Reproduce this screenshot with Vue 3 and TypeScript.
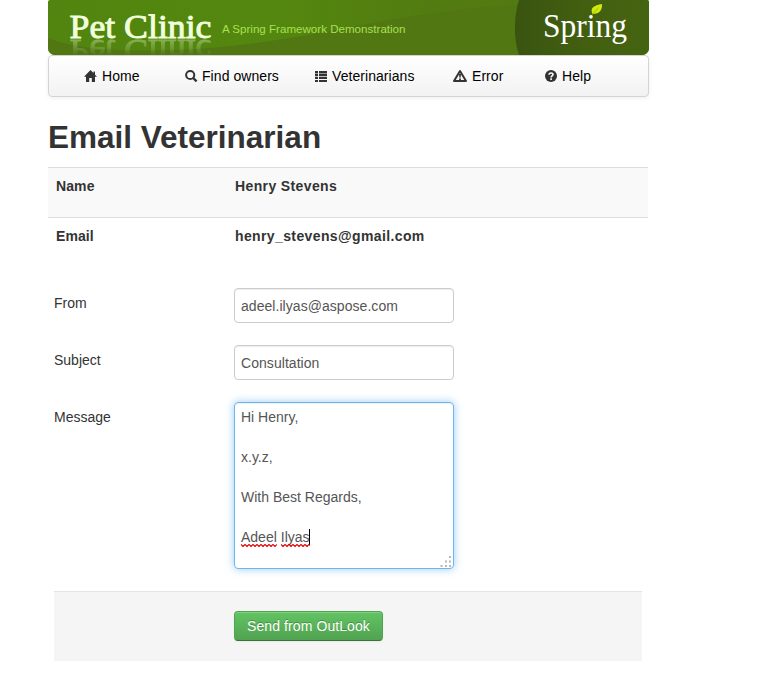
<script setup lang="ts">
import { ref } from 'vue'

type IconName = 'home' | 'search' | 'list' | 'warning' | 'help'

interface NavItem {
  label: string
  icon: IconName
}

const navItems: NavItem[] = [
  { label: 'Home', icon: 'home' },
  { label: 'Find owners', icon: 'search' },
  { label: 'Veterinarians', icon: 'list' },
  { label: 'Error', icon: 'warning' },
  { label: 'Help', icon: 'help' },
]

const from = ref('adeel.ilyas@aspose.com')
const subject = ref('Consultation')
const messageLines: string[] = ['Hi Henry,', '', 'x.y.z,', '', 'With Best Regards,', '']
const signature: string[] = ['Adeel', 'Ilyas']
</script>

<template>
  <div class="page">
    <header class="banner">
      <svg width="601" height="55" viewBox="0 0 601 55">
        <defs>
          <linearGradient id="base" x1="0" x2="1" y1="0" y2="0">
            <stop offset="0" stop-color="#52850f" />
            <stop offset="0.38" stop-color="#54870f" />
            <stop offset="0.65" stop-color="#527b11" />
            <stop offset="0.8" stop-color="#527a12" />
          </linearGradient>
          <linearGradient id="panel" x1="0" x2="1" y1="0" y2="0">
            <stop offset="0" stop-color="#3a5410" />
            <stop offset="0.5" stop-color="#425f10" />
            <stop offset="1" stop-color="#456411" />
          </linearGradient>
          <linearGradient id="fade" x1="0" x2="0" y1="39" y2="54" gradientUnits="userSpaceOnUse">
            <stop offset="0" stop-color="#fff" stop-opacity="0.36" />
            <stop offset="1" stop-color="#fff" stop-opacity="0.04" />
          </linearGradient>
          <mask id="reflect" maskUnits="userSpaceOnUse" x="0" y="39" width="200" height="16">
            <rect x="0" y="39" width="200" height="16" fill="url(#fade)" />
          </mask>
        </defs>
        <rect width="601" height="55" fill="url(#base)" />
        <path d="M0 38C25 48 62 50.5 100 50.5C190 50 260 35 330 22C390 11 430 7 480 4V55H0Z" fill="#517713" />
        <path d="M471 0C466 15 465 38 471 55H601V0Z" fill="url(#panel)" />
        <text class="brand" x="21.500" y="38" textLength="142" lengthAdjust="spacingAndGlyphs">Pet Clinic</text>
        <g mask="url(#reflect)" aria-hidden="true">
          <text class="brand" x="21.500" y="-40" transform="scale(1 -1)" textLength="142" lengthAdjust="spacingAndGlyphs">Pet Clinic</text>
        </g>
        <text class="tagline" x="174" y="33" textLength="183.500" lengthAdjust="spacingAndGlyphs">A Spring Framework Demonstration</text>
        <text class="spring" x="495" y="36.500" textLength="84" lengthAdjust="spacingAndGlyphs">Spring</text>
        <path d="M544.5 14C541.5 8 546 5.500 554 4C554.500 10 551.500 14 544.500 14Z" fill="#d0e80c" />
        <path d="M544 15L550.500 7.500" stroke="#8ba60c" stroke-width="0.6" />
      </svg>
    </header>

    <nav class="nav">
      <a v-for="item in navItems" :key="item.label" class="nav-item">
        <svg class="icon" width="14" height="14" viewBox="0 0 14 14">
          <path v-if="item.icon === 'home'" d="M6.5 1L0 7.800H2V13H5.200V9H7.800V13H11V7.800H13L11 5.700V2.500H9.500V4.100Z" />
          <g v-else-if="item.icon === 'search'" fill="none" stroke="#333">
            <circle cx="5.2" cy="6" r="4.1" stroke-width="2" />
            <path d="M8.2 9L11.6 12.4" stroke-width="2.4" />
          </g>
          <path v-else-if="item.icon === 'list'" d="M0 2H3V4.4H0ZM4 2H12V4.4H4ZM0 5.1H3V7.2H0ZM4 5.1H12V7.2H4ZM0 8H3V10.1H0ZM4 8H12V10.1H4ZM0 11H3V13H0ZM4 11H12V13H4Z" />
          <g v-else-if="item.icon === 'warning'">
            <path d="M7 2L13 12H1Z" fill="none" stroke="#333" stroke-width="2" stroke-linejoin="round" />
            <path d="M6 5H8L7.600 8.800H6.400ZM6.100 9.400H7.900V11.100H6.100Z" />
          </g>
          <g v-else>
            <circle cx="6" cy="7" r="6" />
            <path d="M4.1 5.8C4.1 3.3 8 3.4 8 5.6C8 7 6.1 6.9 6.1 8.4M6.1 9.3V10.9" fill="none" stroke="#fff" stroke-width="1.6" />
          </g>
        </svg>
        <span>{{ item.label }}</span>
      </a>
    </nav>

    <h1>Email Veterinarian</h1>

    <dl class="details">
      <div class="detail striped">
        <dt>Name</dt>
        <dd>Henry Stevens</dd>
      </div>
      <div class="detail">
        <dt>Email</dt>
        <dd>henry_stevens@gmail.com</dd>
      </div>
    </dl>

    <form class="form" @submit.prevent>
      <div class="field">
        <label for="from">From</label>
        <input id="from" v-model="from" type="text" />
      </div>
      <div class="field">
        <label for="subject">Subject</label>
        <input id="subject" v-model="subject" type="text" />
      </div>
      <div class="field">
        <label>Message</label>
        <div class="message" role="textbox" aria-multiline="true">
          <div v-for="(line, i) in messageLines" :key="i" class="line">{{ line }}</div>
          <div class="line signature">
            <span v-for="word in signature" :key="word" class="misspelt">{{ word }}<svg class="squiggle" height="3">
              <defs>
                <pattern :id="'wave-' + word" width="4" height="3" patternUnits="userSpaceOnUse">
                  <path d="M-1 1.5L0 0.5L2 2.5L4 0.5L5 1.500" fill="none" stroke="#e80000" stroke-width="1.200" />
                </pattern>
              </defs>
              <rect width="100%" height="3" :fill="'url(#wave-' + word + ')'" />
            </svg></span><i class="caret"></i>
          </div>
          <svg class="grip" width="12" height="11" viewBox="0 0 12 11">
            <path d="M9 0h2v2h-2zM5 4.5h2v2h-2zM9 4.5h2v2h-2zM0.5 9h2v2h-2zM5 9h2v2h-2zM9 9h2v2h-2z" fill="#b8b8b8" />
          </svg>
        </div>
      </div>
      <div class="actions">
        <button type="submit">Send from OutLook</button>
      </div>
    </form>
  </div>
</template>

<style>
body {
  background: #fff;
}
</style>

<style scoped>
.page {
  width: 601px;
  margin-left: 48px;
  font: 14px/20px "Liberation Sans", Arial, sans-serif;
  color: #333;
}

.page * {
  box-sizing: border-box;
}

.banner {
  height: 55px;
  overflow: hidden;
  border-radius: 2px 2px 7px 7px;
}

.banner svg {
  display: block;
}

.brand {
  font: 34px "Liberation Serif", serif;
  fill: #f0ffdc;
  stroke: #f0ffdc;
  stroke-width: 0.9px;
}

.tagline {
  font: 11px "Liberation Sans", sans-serif;
  fill: #a8e050;
}

.spring {
  font: 33px "Liberation Serif", serif;
  fill: #fff;
}

.nav {
  display: grid;
  grid-template-columns: 101px 130px 139px 91px auto;
  align-items: center;
  height: 42px;
  padding-left: 35px;
  border: 1px solid #d4d4d4;
  border-radius: 4px;
  background: linear-gradient(#fff, #f2f2f2);
  box-shadow: 0 1px 4px rgba(0, 0, 0, 0.065);
  color: #000;
}

.nav-item {
  display: flex;
  align-items: center;
  gap: 3px;
  letter-spacing: 0.06px;
}

.nav-item:first-child {
  gap: 4px;
}

.nav-item:nth-child(4) .icon {
  margin: 0 1px 0 -1px;
}

.nav-item:nth-child(4) {
  gap: 4px;
}

.icon {
  fill: #333;
  flex: none;
}

h1 {
  margin: 20px 0 10px;
  font-size: 31.5px;
  line-height: 40px;
}

.details {
  width: 600px;
  margin: 0;
}

.detail {
  display: flex;
  height: 50px;
  padding: 8px;
  border-top: 1px solid #ddd;
  font-weight: bold;
}

.striped {
  background: #f9f9f9;
}

dt {
  width: 179px;
  letter-spacing: 0.1px;
}

dd {
  margin: 0;
  letter-spacing: 0.38px;
}

.form {
  padding: 21px 0 0 6px;
}

.field {
  display: flex;
  margin-bottom: 22px;
}

.field label {
  width: 180px;
  padding-top: 5px;
}

input {
  width: 220px;
  height: 35px;
  margin: 0;
  padding: 4px 6px;
  border: 1px solid #ccc;
  border-radius: 4px;
  background: #fff;
  box-shadow: inset 0 1px 1px rgba(0, 0, 0, 0.075);
  font: inherit;
  letter-spacing: 0.05px;
  color: #555;
  outline: none;
}

.message {
  position: relative;
  width: 220px;
  height: 167px;
  padding: 4px 6px;
  border: 1px solid #6fb5ee;
  border-radius: 4px;
  box-shadow: inset 0 1px 1px rgba(0, 0, 0, 0.075), 0 0 8px rgba(82, 168, 236, 0.6);
  color: #555;
}

.line {
  height: 20px;
}

.signature {
  display: flex;
  gap: 4px;
}

.misspelt {
  position: relative;
}

.squiggle {
  position: absolute;
  left: 0;
  bottom: 0;
  width: 100%;
}

.caret {
  width: 1px;
  height: 16px;
  margin: 2px 0 0 -5px;
  background: #000;
}

.grip {
  position: absolute;
  right: 1px;
  bottom: 1px;
}

.actions {
  width: 588px;
  height: 70px;
  padding: 19px 0 0 180px;
  border-top: 1px solid #e5e5e5;
  background: #f5f5f5;
}

button {
  display: block;
  width: 149px;
  height: 30px;
  padding: 0;
  border: 1px solid;
  border-color: #51a351 #51a351 #387038;
  border-radius: 4px;
  background: linear-gradient(#62c462, #51a351);
  box-shadow: inset 0 1px 0 rgba(255, 255, 255, 0.2), 0 1px 2px rgba(0, 0, 0, 0.05);
  font: inherit;
  letter-spacing: 0.09px;
  color: #fff;
  text-shadow: 0 -1px 0 rgba(0, 0, 0, 0.25);
}
</style>
